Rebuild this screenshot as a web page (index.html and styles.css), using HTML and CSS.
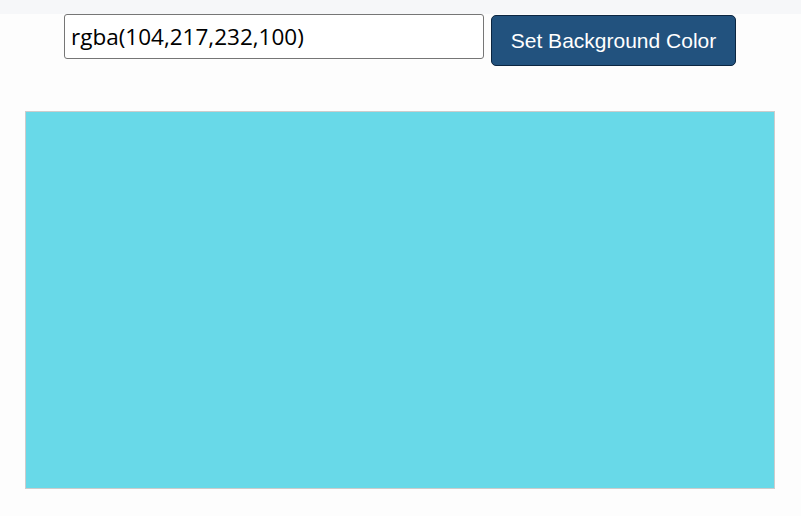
FILE: index.html
```html
<!DOCTYPE html>
<html>
<head>
<meta charset="utf-8">
<link rel="stylesheet" href="styles.css">
</head>
<body>
<div class="strip"></div>
<div class="controls">
  <input class="color-input" type="text" value="rgba(104,217,232,100)">
  <button class="set-btn">Set Background Color</button>
</div>
<div class="swatch"></div>
</body>
</html>
```
FILE: styles.css
```css
html, body {
  margin: 0;
  padding: 0;
  background: #fdfdfd;
  width: 801px;
  height: 516px;
  overflow: hidden;
}
.strip {
  height: 14px;
  background: #f6f7f9;
}
.controls {
  display: flex;
  justify-content: center;
  align-items: flex-start;
  gap: 7px;
  padding-right: 1px;
}
.color-input {
  box-sizing: border-box;
  width: 420px;
  height: 45px;
  margin: 0;
  padding: 0 6px;
  border: 1px solid #767676;
  border-radius: 3px;
  background: #fff;
  font-family: "Open Sans", "Noto Sans", sans-serif;
  font-size: 22.5px;
  color: #000;
  outline: none;
}
.set-btn {
  box-sizing: border-box;
  width: 245px;
  height: 51px;
  margin: 1px 0 0 0;
  padding: 1px 0 0 0;
  border: 1px solid #0c2641;
  border-radius: 5px;
  background: #22527e;
  color: #fff;
  font-family: "Liberation Sans", Arial, sans-serif;
  font-size: 21px;
}
.swatch {
  box-sizing: border-box;
  width: 750px;
  height: 378px;
  margin: 45px 0 0 25px;
  border: 1px solid #cccccc;
  background: rgb(104, 217, 232);
}
```
